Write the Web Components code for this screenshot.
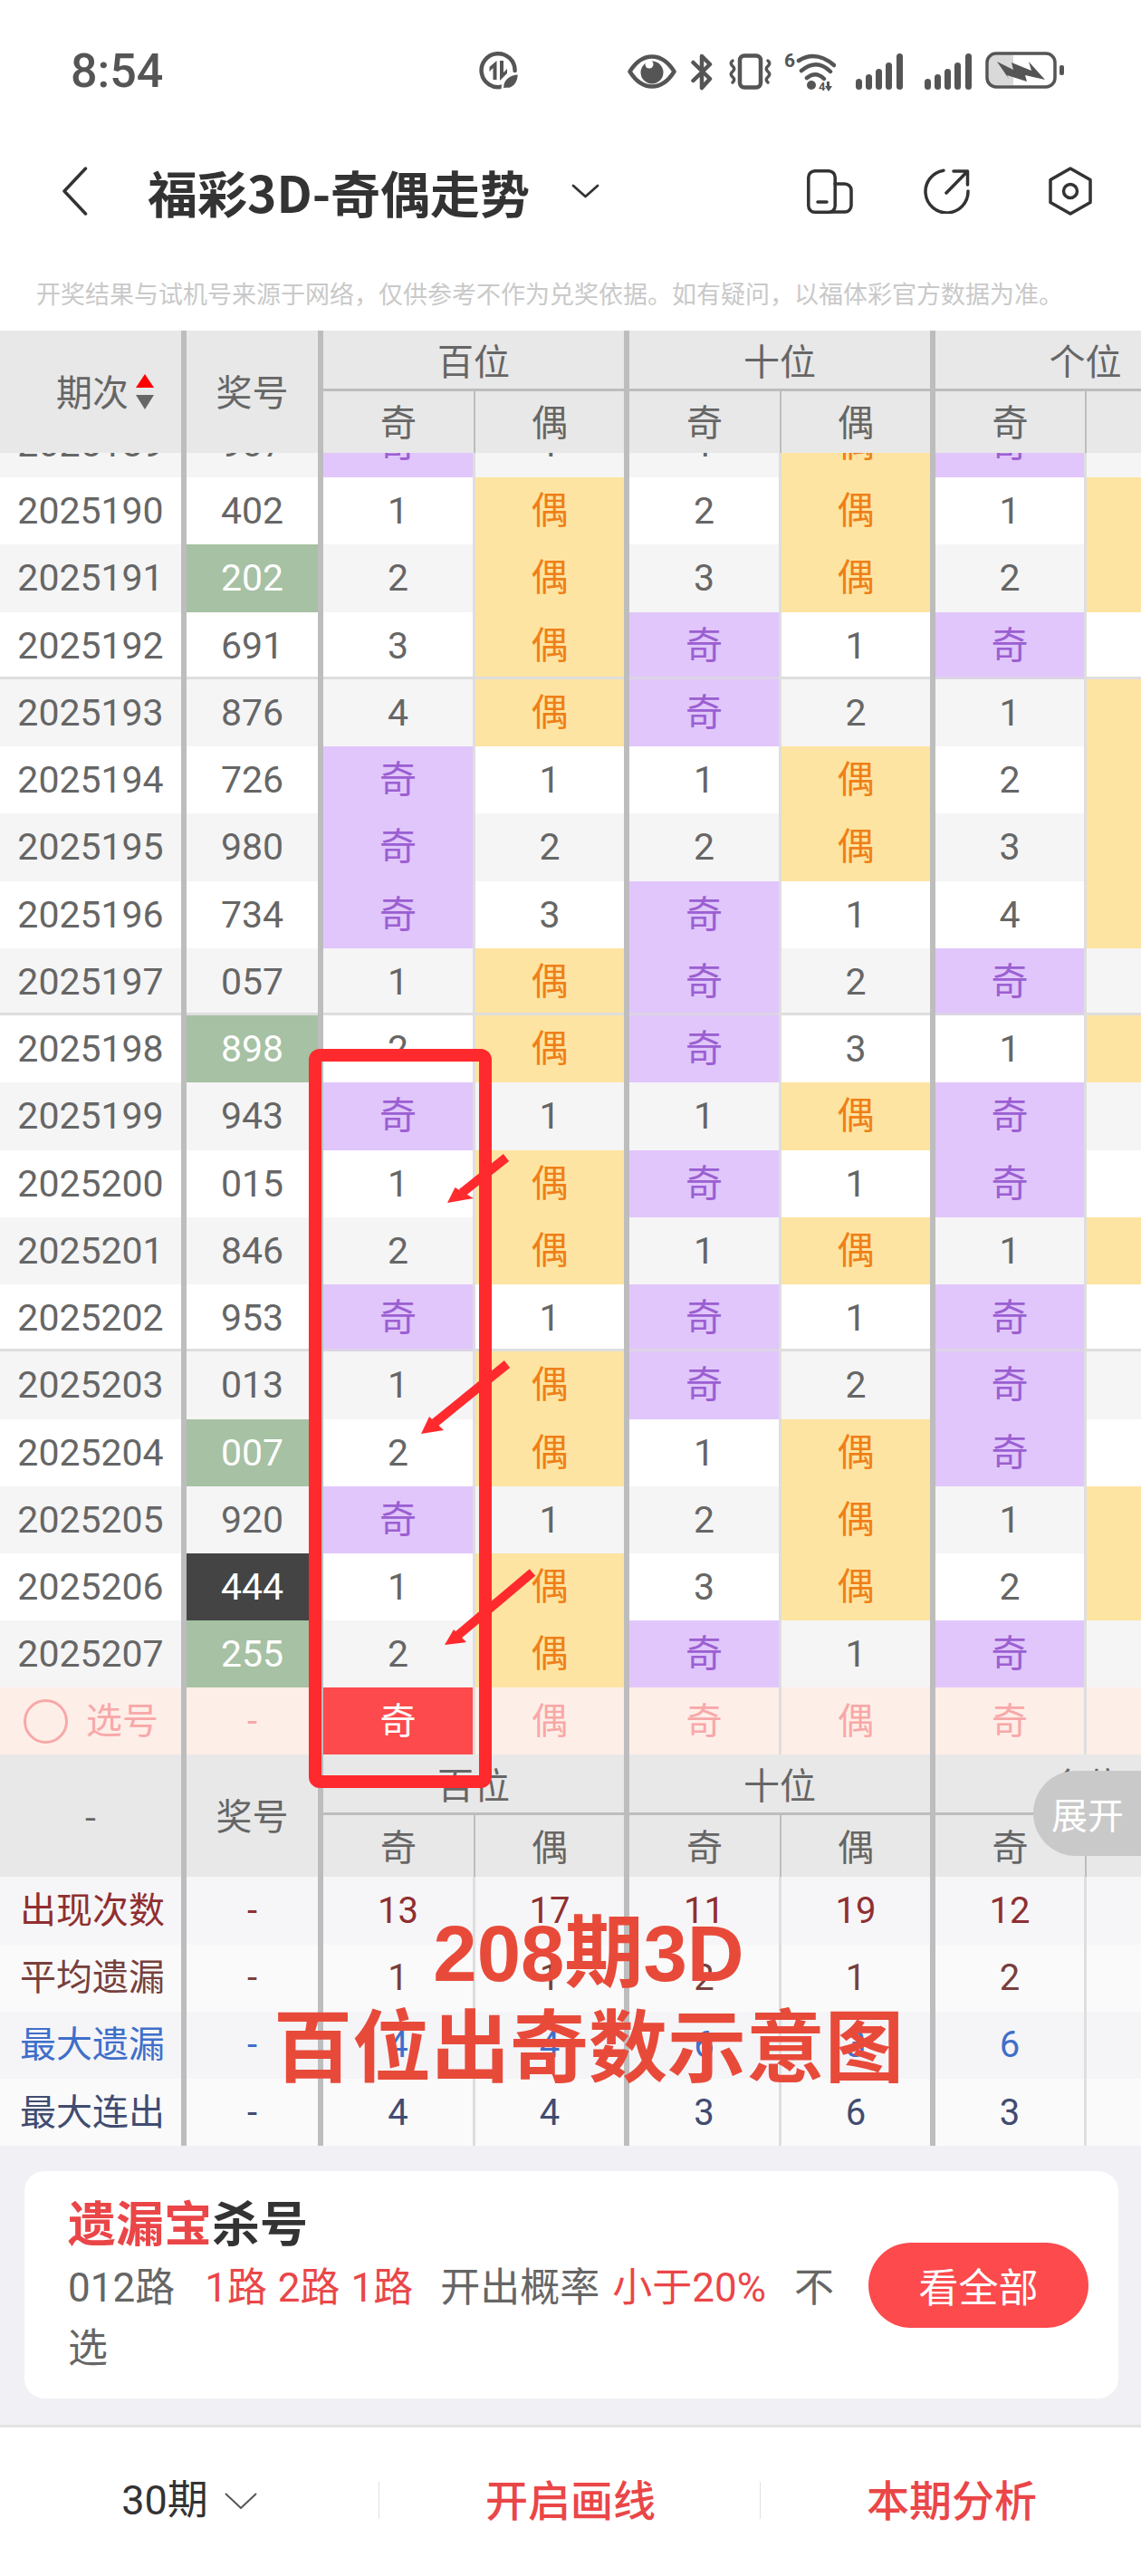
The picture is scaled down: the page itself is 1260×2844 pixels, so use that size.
<!DOCTYPE html>
<html lang="zh">
<head>
<meta charset="utf-8">
<title>福彩3D-奇偶走势</title>
<style>
  html, body { margin: 0; background: #fff; }
  body {
    position: relative;
    width: 1260px;
    height: 2844px;
    overflow: hidden;
    font-family: Roboto, "Noto Sans CJK SC", sans-serif;
    color: #666;
    --cols: 206px 151px 168px 170px 168px 170px 167px 170px;
    --row-h: 74.25px;
    --rule: #bdbdbd;
    --thin: #dedede;
  }
</style>
</head>
<body>
<status-bar></status-bar>
<nav-bar>福彩3D-奇偶走势</nav-bar>
<notice-line>开奖结果与试机号来源于网络&#65292;仅供参考不作为兑奖依据。如有疑问&#65292;以福体彩官方数据为准。</notice-line>
<trend-head period="期次" sort></trend-head>
<trend-body></trend-body>
<pick-row></pick-row>
<trend-head period="-"></trend-head>
<stat-row label="出现次数" values="13,17,11,19,12" tone="#8f2f31" bg="#f6f6f8"></stat-row>
<stat-row label="平均遗漏" values="1,1,2,1,2" tone="#77403c" bg="#fafafb"></stat-row>
<stat-row label="最大遗漏" values="4,4,6,3,6" tone="#3f6fc9" bg="#f5f5f8"></stat-row>
<stat-row label="最大连出" values="4,4,3,6,3" tone="#414c70" bg="#fafafb"></stat-row>
<promo-card></promo-card>
<tool-bar></tool-bar>
<side-tab>展开</side-tab>
<mark-overlay></mark-overlay>

<script>
// small helper so each element only has to declare its css + html
const define = (tag, css, html, init) => {
  customElements.define(tag, class extends HTMLElement {
    constructor() {
      super()
      this.attachShadow({ mode: 'open' })
    }
    connectedCallback() {
      // rendered here and not in the constructor: createElement has no attributes yet
      this.shadowRoot.innerHTML =
        `<style>${css}</style>` + (typeof html === 'function' ? html(this) : html)
      if (init) init(this)
    }
  })
}

define('status-bar', `
  :host { display: flex; align-items: center; height: 158px; padding: 0 85px 0 78px; box-sizing: border-box; color: #555; }
  .time { font: 500 52px/1 Roboto, sans-serif; width: 99px; color: #555; white-space: nowrap; }
  svg { display: block; flex: none; fill: #555; }
  .line { fill: none; stroke: #555; stroke-linecap: round; stroke-linejoin: round; }
  .push { margin-left: auto; }
`, `
  <span class="time">8:54</span>
  <svg class="push" width="45" height="46" viewBox="0 0 45 46" style="margin-right:119px">
    <path class="line" stroke-width="4.5" d="M26 39.5A18.5 18.5 0 1 1 39.6 22"/>
    <path d="M19.5 11v21h-4V19l-4 4v-5z"/>
    <path d="M23 11h4v13l4-4v5l-8 8z"/>
    <path stroke="#fff" stroke-width="2.5" d="M26 43c-1-11 6-17 18-18 0 11-6 18-15 17z"/>
  </svg>
  <svg width="54" height="38" viewBox="0 0 54 38" style="margin-right:15px">
    <path class="line" stroke-width="4.5" d="M2.5 19C10 7 18 2.500 27 2.500S44 7 51.500 19C44 31 36 35.500 27 35.500S10 31 2.500 19z"/>
    <circle cx="27" cy="20" r="12.500"/>
    <circle cx="24" cy="11" r="4.500" fill="#fff"/>
  </svg>
  <svg width="26" height="42" viewBox="0 0 26 42" style="margin-right:16px">
    <path class="line" stroke-width="4.500" d="M3.500 11L22 29l-9 10V4l9 9L3.500 31"/>
  </svg>
  <svg width="49" height="40" viewBox="0 0 49 40" style="margin-right:13px">
    <rect class="line" x="13" y="2.500" width="23" height="35" rx="5" stroke-width="4.500"/>
    <path class="line" stroke-width="3.500" d="M5 8q-3.500 3 0 6t0 6 0 6 0 6M44 8q3.500 3 0 6t0 6 0 6 0 6"/>
  </svg>
  <svg width="57" height="43" viewBox="0 0 57 43" style="margin-right:22px">
    <text x="0" y="16" font-family="Roboto, sans-serif" font-size="21" font-weight="700" fill="#555">6</text>
    <path class="line" stroke-width="4.500" d="M16 9Q35-3 55 14M19 20Q36 6 51 21M25 28Q35 20 44 29"/>
    <circle cx="30" cy="36" r="5"/>
    <text x="38" y="42" font-family="Roboto, sans-serif" font-size="13" font-weight="700" fill="#555">4</text>
    <path d="M47 32h3v5h3l-4 6-4-6h2z"/>
  </svg>
  <signal-bars style="margin-right:24px"></signal-bars>
  <signal-bars style="margin-right:15px"></signal-bars>
  <svg width="87" height="44" viewBox="0 0 87 44">
    <path fill="#d9d9d9" d="M10 4h21v33H10a6 6 0 0 1-6-6V10a6 6 0 0 1 6-6z"/>
    <rect class="line" x="2" y="2" width="75" height="37" rx="10" stroke-width="3.500"/>
    <path d="M13 11l18 9-2-8 22 9-3-10 18 20-22-5 2 7-22-7 2 4z"/>
    <rect x="82" y="15" width="5" height="11" rx="2"/>
  </svg>
`)

define('signal-bars', `
  :host { display: block; flex: none; }
  svg { display: block; fill: #555; }
`, `
  <svg width="52" height="40" viewBox="0 0 52 40">
    <rect x="0" y="28" width="7" height="12" rx="3.500"/>
    <rect x="11" y="23" width="7" height="17" rx="3.500"/>
    <rect x="22" y="17" width="7" height="23" rx="3.500"/>
    <rect x="33" y="10" width="7" height="30" rx="3.500"/>
    <rect x="45" y="0" width="7" height="40" rx="3.500"/>
  </svg>
`)

define('nav-bar', `
  :host { display: flex; align-items: center; height: 106px; padding: 0 53px 0 68px; box-sizing: border-box; color: #333; }
  svg { display: block; flex: none; fill: none; stroke: #333; stroke-linecap: round; stroke-linejoin: round; }
  .title { margin-left: 66px; font: 700 55px/1 "Noto Sans CJK SC", sans-serif; white-space: nowrap; color: #333; }
  .caret { margin-left: 46px; }
  .tools { margin-left: auto; display: flex; align-items: center; }
`, `
  <svg width="29" height="54" viewBox="0 0 29 54" stroke-width="3.500"><path d="M26.500 2L3 27l23.500 25"/></svg>
  <span class="title"><slot></slot></span>
  <svg class="caret" width="31" height="16" viewBox="0 0 31 16" stroke-width="2.800"><path d="M2 2l13.500 12L29 2"/></svg>
  <div class="tools">
    <svg width="51" height="49" viewBox="0 0 51 49" stroke-width="3.500" style="margin-right:78px">
      <rect x="1.800" y="1.800" width="29.400" height="45.400" rx="7"/>
      <path d="M31 16h11a7 7 0 0 1 7 7v17a7 7 0 0 1-7 7H26M12 36h10"/>
    </svg>
    <svg width="51" height="50" viewBox="0 0 51 50" stroke-width="3.500" style="margin-right:86px">
      <path d="M22 2.200A23.500 23.500 0 1 0 49 25M33 3h15.500v15M48 3.500L25 27"/>
    </svg>
    <svg width="50" height="54" viewBox="0 0 50 54" stroke-width="3.500">
      <path d="M25 2l22 12.500v25L25 52 3 39.500v-25z"/>
      <circle cx="25" cy="27" r="7.500"/>
    </svg>
  </div>
`)

define('notice-line', `
  :host { display: block; height: 101px; padding: 45px 0 0 40px; box-sizing: border-box; font: 27px/30px "Noto Sans CJK SC", sans-serif; color: #c9c9c9; white-space: nowrap; }
`, `<slot></slot>`)

define('trend-head', `
  :host { display: grid; grid-template-columns: var(--cols); grid-template-rows: 66.500px 68.500px; width: 1260px; overflow: hidden; background: #e8e8e8; font: 40px/1 "Noto Sans CJK SC", sans-serif; color: #666; }
  div { display: flex; align-items: center; justify-content: center; box-sizing: border-box; border-right: 2.500px solid var(--rule); }
  .side { grid-row: span 2; border-right-width: 6.500px; padding-bottom: 3px; }
  .group { grid-column: span 2; border-right-width: 6.500px; border-bottom: 3px solid var(--rule); }
  .sub { padding-bottom: 3px; }
  .even { border-right-width: 6.500px; }
  .period { gap: 8px; }
  .period.sorted { justify-content: flex-start; padding-left: 62px; }
  .period i { display: grid; gap: 8px; padding-top: 3px; }
  .period b { display: block; width: 0; height: 0; border: 10px solid transparent; border-top: 0; border-bottom: 15px solid #f00; }
  .period b + b { border-bottom: 0; border-top: 16px solid #666; }
`, (el) => {
  const sorted = el.hasAttribute('sort')
  const arrows = sorted ? '<i><b></b><b></b></i>' : ''
  const sub = [0, 1, 2].map(() => '<div class="sub">奇</div><div class="sub even">偶</div>').join('')
  return `
    <div class="side period ${sorted ? 'sorted' : ''}"><span>${el.getAttribute('period')}</span>${arrows}</div>
    <div class="side">奖号</div>
    <div class="group">百位</div><div class="group">十位</div><div class="group">个位</div>
    ${sub}`
})

// one drawn number per row, the cells come from the parity of its digits
define('trend-row', `
  :host { display: grid; grid-template-columns: var(--cols); height: var(--row-h); width: 1260px; overflow: hidden; font: 41px/1 Roboto, "Noto Sans CJK SC", sans-serif; color: #666; }
  div { display: flex; align-items: center; justify-content: center; box-sizing: border-box; padding-top: 1px; border-right: 3px solid var(--thin); }
  .thick { border-right: 6.500px solid var(--rule); }
  .odd { background: #e1c6fb; color: #9b5fd2; }
  .even { background: #fee4a2; color: #ef7f18; }
  .pair { background: #a6c1a3; color: #fff; }
  .triple { background: #444; color: #fff; }
  :host([fifth]) div { box-shadow: inset 0 -3px #dedede; }
  :host([fifth]) .odd { box-shadow: inset 0 -3px #dcd3e6; }
`, (el) => {
  const cells = JSON.parse(el.getAttribute('cells')).map((c, i) => {
    const tone = c === '奇' ? 'odd' : c === '偶' ? 'even' : ''
    return `<div class="${tone} ${i % 2 ? 'thick' : ''}">${c}</div>`
  }).join('')
  return `
    <div class="thick">${el.getAttribute('period')}</div>
    <div class="thick ${el.getAttribute('ball') || ''}">${el.getAttribute('draw')}</div>
    ${cells}`
})

define('trend-body', `
  :host { display: block; height: 1363px; overflow: hidden; }
  .rows { margin-top: -47.250px; }
  trend-row:nth-child(even) { background: #fff; }
  trend-row:nth-child(odd) { background: #f5f5f5; }
`, `<div class="rows"></div>`, (el) => {
  const draws = '907 402 202 691 876 726 980 734 057 898 943 015 846 953 013 007 920 444 255'.split(' ')
  const miss = [0, 0, 0, 0, 0, 0]
  const rows = el.shadowRoot.querySelector('.rows')
  draws.forEach((draw, i) => {
    const cells = []
    ;[...draw].forEach((d, p) => {
      const odd = Number(d) % 2 === 1
      const a = p * 2, b = a + 1
      miss[odd ? a : b] = 0
      miss[odd ? b : a]++
      cells.push(odd ? '奇' : miss[a], odd ? miss[b] : '偶')
    })
    const kinds = new Set(draw).size
    const row = document.createElement('trend-row')
    row.setAttribute('period', 2025189 + i)
    row.setAttribute('draw', draw)
    row.setAttribute('cells', JSON.stringify(cells))
    if (kinds === 2) row.setAttribute('ball', 'pair')
    if (kinds === 1) row.setAttribute('ball', 'triple')
    if (i % 5 === 3 && i < 18) row.setAttribute('fifth', '')
    rows.append(row)
  })
})

define('pick-row', `
  :host { display: grid; grid-template-columns: var(--cols); height: var(--row-h); width: 1260px; overflow: hidden; background: #feeee8; font: 40px/1 Roboto, "Noto Sans CJK SC", sans-serif; color: #f8a8a8; }
  div { display: flex; align-items: center; justify-content: center; box-sizing: border-box; padding-top: 1px; border-right: 3px solid var(--thin); }
  .thick { border-right: 6.500px solid var(--rule); }
  .pick { justify-content: flex-start; padding-left: 26px; gap: 20px; }
  .pick i { width: 49px; height: 49px; box-sizing: border-box; border: 3px solid #f8a8a8; border-radius: 50%; }
  .on { background: #fc4a4d; color: #fff; }
`, `
  <div class="thick pick"><i></i><span>选号</span></div>
  <div class="thick">-</div>
  <div class="on">奇</div><div class="thick">偶</div>
  <div>奇</div><div class="thick">偶</div>
  <div>奇</div><div class="thick">偶</div>
`)

define('stat-row', `
  :host { display: grid; grid-template-columns: var(--cols); height: var(--row-h); width: 1260px; overflow: hidden; font: 40px/1 Roboto, "Noto Sans CJK SC", sans-serif; }
  div { display: flex; align-items: center; justify-content: center; box-sizing: border-box; padding-top: 1px; border-right: 3px solid var(--thin); }
  .thick { border-right: 6.500px solid var(--rule); }
  .label { justify-content: flex-start; padding-left: 22px; white-space: nowrap; }
`, (el) => {
  const values = el.getAttribute('values').split(',')
  const tds = [...values, ''].map((v, i) => `<div class="${i % 2 ? 'thick' : ''}">${v}</div>`).join('')
  el.style.background = el.getAttribute('bg')
  el.style.color = el.getAttribute('tone')
  return `<div class="thick label">${el.getAttribute('label')}</div><div class="thick">-</div>${tds}`
})

define('promo-card', `
  :host { display: block; height: 307.750px; box-sizing: border-box; padding: 28px 25px 0 27px; background: #f1f1f5; }
  .card { display: flex; align-items: center; height: 251px; box-sizing: border-box; padding: 0 33px 0 48px; background: #fff; border-radius: 22px; }
  .text { width: 871px; margin-right: 13px; }
  h2 { margin: 0 0 8px; font: 700 53px/66px "Noto Sans CJK SC", sans-serif; color: #333; }
  h2 span, .hit { color: #ea4648; }
  p { margin: 0; font: 44px/67px Roboto, "Noto Sans CJK SC", sans-serif; color: #666; }
  .first { margin-left: 33px; word-spacing: 1px; }
  .gap { margin-left: 30px; }
  .near { margin-left: 14px; }
  .tail { margin-left: 31px; }
  .btn { flex: none; width: 243px; height: 94px; display: flex; align-items: center; justify-content: center; background: #fc4a4d; border-radius: 47px; color: #fff; font: 44px/1 "Noto Sans CJK SC", sans-serif; }
`, `
  <div class="card">
    <div class="text">
      <h2><span>遗漏宝</span>杀号</h2>
      <p>012路<span class="hit first">1路 2路 1路</span><span class="gap">开出概率</span><span class="hit near">小于20%</span><span class="tail">不选</span></p>
    </div>
    <div class="btn">看全部</div>
  </div>
`)

define('tool-bar', `
  :host { display: flex; height: 167px; padding-top: 60px; box-sizing: border-box; border-top: 3px solid #e4e4e4; background: #fff; }
  div { flex: 1; height: 41px; display: flex; align-items: center; justify-content: center; gap: 18px; padding-left: 2px; color: #ea4648; font: 500 47px/1 "Noto Sans CJK SC", sans-serif; }
  div + div { border-left: 1px solid #e2e2e2; }
  span { position: relative; top: -3px; }
  .span { padding-left: 0; color: #333; font: 45px/1 Roboto, "Noto Sans CJK SC", sans-serif; }
  .span span { top: 0; }
  svg { display: block; fill: none; stroke: #555; stroke-width: 2; }
`, `
  <div class="span"><span>30期</span><svg width="36" height="18" viewBox="0 0 36 18"><path d="M1 1l17 16L35 1"/></svg></div>
  <div><span>开启画线</span></div>
  <div><span>本期分析</span></div>
`)

define('side-tab', `
  :host { position: absolute; left: 1141px; top: 1955px; width: 119px; height: 94px; display: flex; align-items: center; padding-left: 20px; box-sizing: border-box; background: #c9c9c9; border-radius: 47px 0 0 47px; color: #fff; font: 40px/1 "Noto Sans CJK SC", sans-serif; white-space: nowrap; }
`, `<slot></slot>`)

define('mark-overlay', `
  :host { position: absolute; inset: 0; pointer-events: none; }
  svg { position: absolute; inset: 0; }
  .note { position: absolute; left: 20px; top: 2104px; width: 1260px; text-align: center; color: #e84a3a; font: 700 87px/105px "Liberation Sans", "Noto Sans CJK SC", sans-serif; }
`, `
  <svg width="1260" height="2844" viewBox="0 0 1260 2844">
    <rect x="348" y="1165" width="188" height="802" rx="5" fill="none" stroke="#ff2a2e" stroke-width="14"/>
    <g stroke="#ff2a2e" stroke-width="10" fill="#ff2a2e">
      <path d="M559 1278L510 1317"/>
      <path d="M560 1506L480 1571"/>
      <path d="M588 1736L505 1806"/>
    </g>
    <g fill="#ff2a2e">
      <path d="M494 1328l8.500-17 20.500 12z"/>
      <path d="M465 1583l9-19 16 15z"/>
      <path d="M491 1816l10-17 14 14z"/>
    </g>
  </svg>
  <div class="note">208期3D<br>百位出奇数示意图</div>
`)
</script>
</body>
</html>
